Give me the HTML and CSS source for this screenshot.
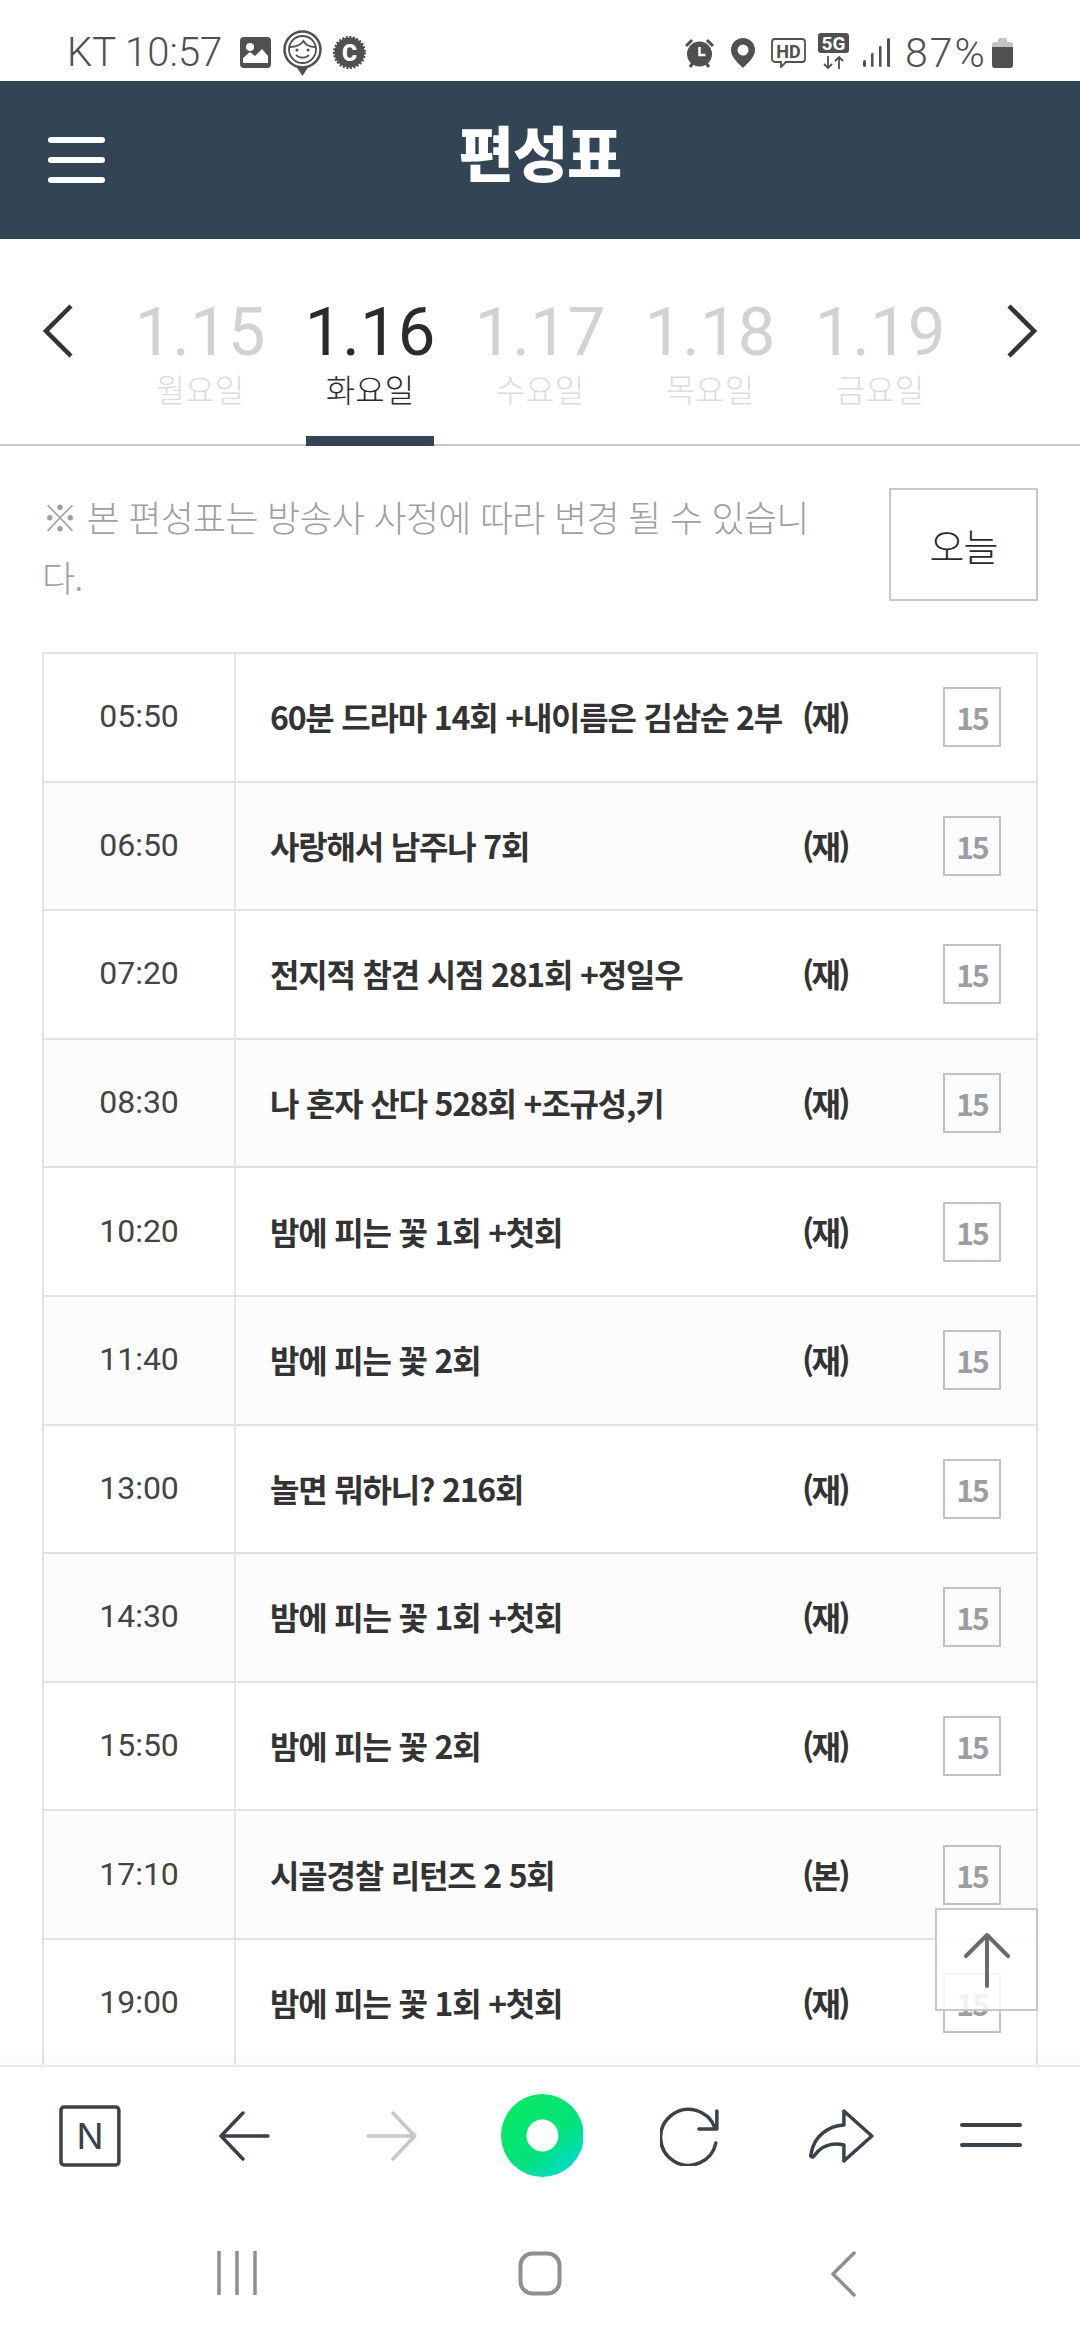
FILE: index.html
```html
<!DOCTYPE html>
<html lang="ko">
<head>
    <meta charset="UTF-8">
    <meta name="viewport" content="width=device-width, initial-scale=1.0">
    <title>편성표</title>
    <link rel="stylesheet" href="styles.css">
</head>
<body>
<div class="phone">
    <!-- status bar -->
    <div class="status-bar">
        <div class="status-left">
            <span class="status-text">KT 10:57</span>
            <svg class="ico-pic" width="31" height="31" viewBox="0 0 31 31">
                <rect width="31" height="31" rx="4" fill="#505050"/>
                <circle cx="10" cy="10" r="4" fill="#fff"/>
                <path d="M3 26v-5l7-6 5 4 7-7 6 7v7z" fill="#fff"/>
            </svg>
            <svg class="ico-face" width="39" height="46" viewBox="0 0 39 46">
                <path d="M13 36l6.500 10 6.500-10z" fill="#505050"/>
                <circle cx="19.500" cy="19.500" r="18" fill="#fff" stroke="#505050" stroke-width="2.500"/>
                <circle cx="19.500" cy="19.500" r="13.500" fill="none" stroke="#505050" stroke-width="1.800"/>
                <path d="M6.500 17c6 0 11-1.500 14-6 2 4 6 6 12 6" fill="none" stroke="#505050" stroke-width="1.800"/>
                <circle cx="14" cy="20" r="1.500" fill="#505050"/>
                <circle cx="25" cy="20" r="1.500" fill="#505050"/>
                <path d="M13 25c3 3.500 10 3.500 13 0" fill="none" stroke="#505050" stroke-width="1.800"/>
            </svg>
            <svg class="ico-c" width="33" height="33" viewBox="0 0 33 33">
                <circle cx="16.500" cy="16.500" r="15" fill="#505050" stroke="#505050" stroke-width="3" stroke-dasharray="2 1.500"/>
                <text x="16.500" y="24.500" text-anchor="middle" class="ico-c-text">C</text>
            </svg>
        </div>
        <div class="status-right">
            <svg width="29" height="30" viewBox="0 0 29 30">
                <path d="M1 8l6-6M28 8l-6-6" stroke="#505050" stroke-width="3"/>
                <path d="M5 29l3-4M24 29l-3-4" stroke="#505050" stroke-width="3"/>
                <circle cx="14.500" cy="16" r="12.500" fill="#505050"/>
                <path d="M14.500 9v8h6" fill="none" stroke="#fff" stroke-width="2.500"/>
            </svg>
            <svg class="ico-pin" width="24" height="30" viewBox="0 0 24 30">
                <path d="M12 0a12 12 0 0 1 12 12c0 7-7 13-12 18C7 25 0 19 0 12A12 12 0 0 1 12 0z" fill="#505050"/>
                <circle cx="12" cy="12" r="5.500" fill="#fff"/>
            </svg>
            <svg class="ico-hd" width="35" height="30" viewBox="0 0 35 30">
                <path d="M4 1h27a3 3 0 0 1 3 3v17a3 3 0 0 1-3 3H15l-5 5v-5H4a3 3 0 0 1-3-3V4a3 3 0 0 1 3-3z" fill="none" stroke="#505050" stroke-width="1.800"/>
                <text x="17.500" y="19.500" text-anchor="middle" class="ico-hd-text">HD</text>
            </svg>
            <svg class="ico-5g" width="31" height="37" viewBox="0 0 31 37">
                <rect width="31" height="20" rx="3" fill="#505050"/>
                <text x="15.500" y="17" text-anchor="middle" class="ico-5g-text">5G</text>
                <path d="M10 23v12M6 31l4 4 4-4M21 36V24M17 28l4-4 4 4" fill="none" stroke="#505050" stroke-width="1.800"/>
            </svg>
            <svg class="ico-signal" width="27" height="29" viewBox="0 0 27 29">
                <rect x="0" y="22" width="3" height="7" rx="1.500" fill="#505050"/>
                <rect x="8" y="15" width="2.500" height="14" rx="1.200" fill="#505050"/>
                <rect x="16" y="8" width="2.500" height="21" rx="1.200" fill="#505050"/>
                <rect x="24" y="0" width="3" height="29" rx="1.500" fill="#505050"/>
            </svg>
            <span class="status-text status-pct">87%</span>
            <svg class="ico-batt" width="21" height="31" viewBox="0 0 21 31">
                <path d="M6 3a2 2 0 0 1 2-2h5a2 2 0 0 1 2 2v2h3a3 3 0 0 1 3 3v3H0V8a3 3 0 0 1 3-3h3z" fill="#c4c4c4"/>
                <path d="M0 10h21v18a3 3 0 0 1-3 3H3a3 3 0 0 1-3-3z" fill="#505050"/>
            </svg>
        </div>
    </div>

    <header class="top-bar">
        <div class="hamburger"><span></span><span></span><span></span></div>
        <h1>편성표</h1>
    </header>

    <main class="content">
        <nav class="date-nav">
            <svg class="date-arrow" width="30" height="54" viewBox="0 0 30 54">
                <path d="M28 2L3 27l25 25" fill="none" stroke="#333" stroke-width="4.500"/>
            </svg>
            <div class="date-list">
                <a class="date-item"><b>1.15</b><span>월요일</span></a>
                <a class="date-item active"><b>1.16</b><span>화요일</span></a>
                <a class="date-item"><b>1.17</b><span>수요일</span></a>
                <a class="date-item"><b>1.18</b><span>목요일</span></a>
                <a class="date-item"><b>1.19</b><span>금요일</span></a>
            </div>
            <svg class="date-arrow" width="30" height="54" viewBox="0 0 30 54">
                <path d="M2 2l25 25L2 52" fill="none" stroke="#333" stroke-width="4.500"/>
            </svg>
        </nav>

        <div class="notice-row">
            <p class="notice">※ 본 편성표는 방송사 사정에 따라 변경 될 수 있습니다.</p>
            <button class="today-btn">오늘</button>
        </div>

        <div class="schedule">
            <div class="row">
                <div class="time">05:50</div>
                <div class="title">60분 드라마 14회 +내이름은 김삼순 2부</div>
                <div class="kind">(재)</div>
                <div class="rating"><span class="badge">15</span></div>
            </div>
            <div class="row">
                <div class="time">06:50</div>
                <div class="title">사랑해서 남주나 7회</div>
                <div class="kind">(재)</div>
                <div class="rating"><span class="badge">15</span></div>
            </div>
            <div class="row">
                <div class="time">07:20</div>
                <div class="title">전지적 참견 시점 281회 +정일우</div>
                <div class="kind">(재)</div>
                <div class="rating"><span class="badge">15</span></div>
            </div>
            <div class="row">
                <div class="time">08:30</div>
                <div class="title">나 혼자 산다 528회 +조규성,키</div>
                <div class="kind">(재)</div>
                <div class="rating"><span class="badge">15</span></div>
            </div>
            <div class="row">
                <div class="time">10:20</div>
                <div class="title">밤에 피는 꽃 1회 +첫회</div>
                <div class="kind">(재)</div>
                <div class="rating"><span class="badge">15</span></div>
            </div>
            <div class="row">
                <div class="time">11:40</div>
                <div class="title">밤에 피는 꽃 2회</div>
                <div class="kind">(재)</div>
                <div class="rating"><span class="badge">15</span></div>
            </div>
            <div class="row">
                <div class="time">13:00</div>
                <div class="title">놀면 뭐하니? 216회</div>
                <div class="kind">(재)</div>
                <div class="rating"><span class="badge">15</span></div>
            </div>
            <div class="row">
                <div class="time">14:30</div>
                <div class="title">밤에 피는 꽃 1회 +첫회</div>
                <div class="kind">(재)</div>
                <div class="rating"><span class="badge">15</span></div>
            </div>
            <div class="row">
                <div class="time">15:50</div>
                <div class="title">밤에 피는 꽃 2회</div>
                <div class="kind">(재)</div>
                <div class="rating"><span class="badge">15</span></div>
            </div>
            <div class="row">
                <div class="time">17:10</div>
                <div class="title">시골경찰 리턴즈 2 5회</div>
                <div class="kind">(본)</div>
                <div class="rating"><span class="badge">15</span></div>
            </div>
            <div class="row">
                <div class="time">19:00</div>
                <div class="title">밤에 피는 꽃 1회 +첫회</div>
                <div class="kind">(재)</div>
                <div class="rating"><span class="badge">15</span></div>
            </div>
        </div>

        <a class="to-top">
            <svg width="46" height="56" viewBox="0 0 46 56">
                <path d="M23 54V3M2 24L23 3l21 21" fill="none" stroke="#6b6b6b" stroke-width="4" stroke-linecap="round" stroke-linejoin="round"/>
            </svg>
        </a>
    </main>

    <!-- browser toolbar -->
    <div class="browser-bar">
        <svg class="tool-n" width="62" height="62" viewBox="0 0 62 62">
            <rect x="2" y="2" width="58" height="58" rx="3" fill="none" stroke="#3a4148" stroke-width="3.500"/>
            <text x="31" y="44" text-anchor="middle" class="tool-n-text">N</text>
        </svg>
        <svg class="tool-back" width="52" height="50" viewBox="0 0 52 50">
            <path d="M50 25H3M25 2L3 25l22 23" fill="none" stroke="#3a4148" stroke-width="3.500" stroke-linecap="round" stroke-linejoin="round"/>
        </svg>
        <svg class="tool-fwd" width="52" height="50" viewBox="0 0 52 50">
            <path d="M2 25h47M27 2l22 23-22 23" fill="none" stroke="#c8c8c8" stroke-width="3.500" stroke-linecap="round" stroke-linejoin="round"/>
        </svg>
        <svg class="tool-green" width="83" height="83" viewBox="0 0 83 83">
            <defs>
                <linearGradient id="greenGrad" x1="0.250" y1="0.200" x2="0.850" y2="0.900">
                    <stop offset="0" stop-color="#05e868"/>
                    <stop offset="0.550" stop-color="#04e27c"/>
                    <stop offset="1" stop-color="#00dcc8"/>
                </linearGradient>
            </defs>
            <circle cx="41.500" cy="41.500" r="41.500" fill="url(#greenGrad)"/>
            <circle cx="41.500" cy="41.500" r="16" fill="#fff"/>
        </svg>
        <svg class="tool-reload" width="60" height="60" viewBox="0 0 60 60">
            <path d="M55 22A28 28 0 1 0 56 37" fill="none" stroke="#3a4148" stroke-width="3.500" stroke-linecap="round"/>
            <path d="M57 5v18H39" fill="none" stroke="#3a4148" stroke-width="3.500" stroke-linecap="round" stroke-linejoin="round"/>
        </svg>
        <svg class="tool-share" width="66" height="56" viewBox="0 0 66 56">
            <path d="M36 3L64 28 36 53V37C24 34 13 38 6 48 4 50 2 49 3 46 6 28 20 18 36 17Z" fill="none" stroke="#3a4148" stroke-width="3.500" stroke-linejoin="round"/>
        </svg>
        <div class="tool-menu"><span></span><span></span></div>
    </div>

    <!-- android nav -->
    <div class="nav-bar">
        <svg width="40" height="44" viewBox="0 0 40 44">
            <path d="M2 1v42M20 1v42M38 1v42" stroke="#8f8f8f" stroke-width="3.500" stroke-linecap="round"/>
        </svg>
        <svg width="44" height="45" viewBox="0 0 44 45">
            <rect x="2.500" y="2.500" width="39" height="40" rx="12" fill="none" stroke="#8f8f8f" stroke-width="4"/>
        </svg>
        <svg width="26" height="46" viewBox="0 0 26 46">
            <path d="M24 2L3 23l21 21" fill="none" stroke="#8f8f8f" stroke-width="3.500" stroke-linecap="round" stroke-linejoin="round"/>
        </svg>
    </div>
</div>
</body>
</html>
```

FILE: styles.css
```css
* {
    box-sizing: border-box;
}

body {
    margin: 0;
    background-color: #fff;
    font-family: "Noto Sans CJK KR", Roboto, sans-serif;
    color: #333;
}

.phone {
    width: 1080px;
    height: 2340px;
    display: flex;
    flex-direction: column;
    overflow: hidden;
}

/* status bar */
.status-bar {
    height: 81px;
    flex-shrink: 0;
    display: flex;
    justify-content: space-between;
    align-items: center;
    padding: 24px 67px 0 67px;
}

.status-left,
.status-right {
    display: flex;
    align-items: center;
}

.status-text {
    font-family: Roboto, sans-serif;
    font-weight: 300;
    font-size: 40px;
    line-height: 44px;
    color: #505050;
}

.ico-pic { margin-left: 18px; }
.ico-face { margin-left: 12px; }
.ico-c { margin-left: 11px; }
.ico-c-text { font-family: Roboto, sans-serif; font-weight: 900; font-size: 23px; fill: #fff; }

.ico-pin { margin-left: 17px; }
.ico-hd { margin-left: 16px; }
.ico-hd-text { font-family: Roboto, sans-serif; font-weight: 700; font-size: 18px; fill: #505050; }
.ico-5g { margin-left: 12px; margin-top: -3px; }
.ico-5g-text { font-family: Roboto, sans-serif; font-weight: 700; font-size: 19px; fill: #fff; }
.ico-signal { margin-left: 14px; }
.status-pct { margin-left: 15px; width: 79px; font-size: 41px; letter-spacing: 2px; white-space: nowrap; }
.ico-batt { margin-left: 8px; }

/* header */
.top-bar {
    height: 158px;
    flex-shrink: 0;
    background-color: #334554;
    display: flex;
    align-items: center;
    justify-content: center;
    padding-bottom: 18px;
    position: relative;
}

.top-bar h1 {
    margin: 0;
    color: #fff;
    font-size: 60px;
    font-weight: 900;
    line-height: 1;
    letter-spacing: -1px;
}

.hamburger {
    position: absolute;
    left: 48px;
    top: 56px;
    width: 57px;
    display: flex;
    flex-direction: column;
    gap: 14px;
}

.hamburger span {
    display: block;
    height: 6px;
    border-radius: 3px;
    background-color: #fff;
}

/* main */
.content {
    flex: 1;
    min-height: 0;
    overflow: hidden;
    position: relative;
}

.date-nav {
    height: 207px;
    display: flex;
    justify-content: space-between;
    align-items: flex-start;
    padding: 0 43px;
    border-bottom: 2px solid #c8c8c8;
}

.date-arrow {
    margin-top: 65px;
    flex-shrink: 0;
}

.date-list {
    display: flex;
}

.date-item {
    width: 170px;
    height: 205px;
    display: flex;
    flex-direction: column;
    align-items: center;
    color: #d2d2d2;
}

.date-item b {
    font-family: Roboto, sans-serif;
    font-weight: 400;
    font-size: 67px;
    line-height: 66px;
    margin-top: 60px;
}

.date-item span {
    font-size: 32px;
    font-weight: 300;
    line-height: 46px;
    color: #dcdcdc;
}

.date-item.active {
    color: #2b2b2b;
    position: relative;
}

.date-item.active span {
    color: #2b2b2b;
}

.date-item.active::after {
    content: "";
    position: absolute;
    left: 21px;
    bottom: -2px;
    width: 128px;
    height: 10px;
    background-color: #334554;
}

.notice-row {
    display: flex;
    align-items: flex-start;
    padding: 42px 42px 0 42px;
}

.notice {
    flex: 1;
    margin: -2px 0 0;
    padding: 0 40px 0 0;
    color: #a0a0a0;
    font-size: 36px;
    font-weight: 300;
    line-height: 60px;
    letter-spacing: -0.75px;
}

.today-btn {
    width: 149px;
    height: 113px;
    flex-shrink: 0;
    background-color: #fff;
    border: 2px solid #c8c8c8;
    font-family: "Noto Sans CJK KR", sans-serif;
    font-size: 38px;
    font-weight: 300;
    letter-spacing: -1px;
    color: #2b2b2b;
    padding: 0;
}

.schedule {
    margin: 46px 42px 0 42px;
    border: 2px solid #e2e2e2;
    border-bottom: none;
}

.row {
    height: 128.6px;
    display: flex;
    align-items: center;
    border-bottom: 2px solid #e2e2e2;
}

.row:nth-child(even) {
    background-color: #fcfcfc;
}

.time {
    width: 192px;
    height: 100%;
    flex-shrink: 0;
    border-right: 2px solid #e6e6e6;
    padding-bottom: 2px;
    display: flex;
    align-items: center;
    justify-content: center;
    font-family: Roboto, sans-serif;
    font-size: 32px;
    font-weight: 400;
    color: #444;
}

.title {
    flex: 1;
    padding: 0 0 2px 34px;
    font-size: 32px;
    font-weight: 700;
    letter-spacing: -1.2px;
    white-space: nowrap;
    color: #333;
}

.kind {
    width: 141px;
    flex-shrink: 0;
    padding-bottom: 2px;
    font-size: 32px;
    font-weight: 700;
    letter-spacing: -2.5px;
    color: #333;
}

.rating {
    width: 93px;
    flex-shrink: 0;
    display: flex;
}

.badge {
    width: 58px;
    height: 60px;
    border: 2px solid #bcc3c9;
    display: flex;
    align-items: center;
    justify-content: center;
    font-size: 30px;
    font-weight: 700;
    letter-spacing: -2px;
    color: #9a9ea3;
}

.to-top {
    position: absolute;
    left: 935px;
    top: 1669px;
    width: 103px;
    height: 103px;
    background-color: rgba(255, 255, 255, 0.85);
    border: 2px solid #c8c8c8;
    display: flex;
    align-items: center;
    justify-content: center;
}

/* browser toolbar */
.browser-bar {
    height: 143px;
    flex-shrink: 0;
    background-color: #fff;
    border-top: 2px solid #e8eaec;
    box-shadow: 0 -8px 12px rgba(60, 80, 100, 0.03);
    position: relative;
    display: flex;
    align-items: center;
    padding: 0 58px 4px 59px;
}

.tool-back { margin-left: 97px; }
.tool-fwd { margin-left: 96px; }
.tool-green { margin-left: 83px; }
.tool-reload { margin-left: 77px; }
.tool-share { margin-left: 88px; }
.tool-menu {
    margin-left: 86px;
    width: 62px;
    display: flex;
    flex-direction: column;
    gap: 16px;
    margin-top: -1px;
}
.tool-menu span {
    display: block;
    height: 4px;
    border-radius: 2px;
    background-color: #3a4148;
}

.tool-n-text {
    font-family: Inter, sans-serif;
    font-weight: 400;
    font-size: 36px;
    fill: #3a4148;
}

/* android nav */
.nav-bar {
    height: 132px;
    flex-shrink: 0;
    background-color: #fff;
    display: flex;
    align-items: flex-start;
    padding: 43px 0 0 217px;
}

.nav-bar svg:nth-child(2) { margin-left: 261px; }
.nav-bar svg:nth-child(3) { margin-left: 268px; }
```
